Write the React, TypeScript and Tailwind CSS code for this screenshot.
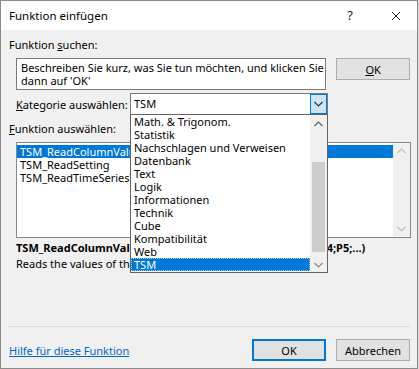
import React from 'react';

const categories = [
  'Math. & Trigonom.',
  'Statistik',
  'Nachschlagen und Verweisen',
  'Datenbank',
  'Text',
  'Logik',
  'Informationen',
  'Technik',
  'Cube',
  'Kompatibilität',
  'Web',
  'TSM',
];

const functions = ['TSM_ReadColumnValues', 'TSM_ReadSetting', 'TSM_ReadTimeSeriesValues'];

function Chevron({ up = false, color = '#606060' }: { up?: boolean; color?: string }) {
  return (
    <svg width="9" height="6" viewBox="0 0 9 6" fill="none">
      <path d={up ? 'M0.5 5 L4.5 1 L8.5 5' : 'M0.5 1 L4.5 5 L8.5 1'} stroke={color} strokeWidth="1.2" />
    </svg>
  );
}

function CategoryDropdown() {
  return (
    <div className="absolute left-0 top-[21px] z-10 flex h-[159px] w-[198px] border border-[#646464] bg-white">
      <ul className="flex-1">
        {categories.map((c) =>
          c === 'TSM' ? (
            <li key={c} className="h-[13px] border border-dotted border-[#99c9ef] bg-[#0078d7] pl-[2px] leading-[11px] text-white">
              {c}
            </li>
          ) : (
            <li key={c} className="h-[13px] pl-[3px] leading-[13px]">
              {c}
            </li>
          ),
        )}
      </ul>
      <div className="flex w-[17px] flex-col bg-[#f0f0f0]">
        <div className="flex h-[17px] items-center justify-center">
          <Chevron up color="#606060" />
        </div>
        <div className="h-[30px]" />
        <div className="mx-[2px] h-[90px] bg-[#cdcdcd]" />
        <div className="flex-1" />
        <div className="flex h-[15px] items-center justify-center">
          <Chevron color="#888888" />
        </div>
      </div>
    </div>
  );
}

export default function App() {
  return (
    <div className="h-[369px] w-[419px] bg-[#dcdcdc]">
      <div className="flex h-[369px] w-[418px] flex-col border border-[#8a8a8a] bg-[#f0f0f0] font-['Noto_Sans',sans-serif] text-[11px] text-black">
        {/* title bar */}
        <div className="flex h-[29px] items-center bg-white pl-[8px]">
          <span className="text-[11.5px] leading-[15px]">Funktion einfügen</span>
          <span className="ml-auto mr-[38px] text-[13px] leading-[15px] text-[#222]">?</span>
          <svg width="10" height="10" viewBox="0 0 10 10" className="mr-[16px]">
            <path d="M1 1 L9 9 M9 1 L1 9" stroke="#222" strokeWidth="1" />
          </svg>
        </div>

        <div className="flex flex-1 flex-col pl-[8px] pr-[7px]">
          <div className="mt-[7px] leading-[15px]">
            Funktion <span className="underline">s</span>uchen:
          </div>

          <div className="mt-[6px] flex items-start gap-[10px] pl-[7px]">
            <div className="h-[32px] w-[311px] border border-[#7a7a7a] bg-white pl-[4px] pr-0 pt-[2px] leading-[13px]">
              Beschreiben Sie kurz, was Sie tun möchten, und klicken Sie dann auf 'OK'
            </div>
            <button className="h-[22px] w-[74px] border border-[#adadad] bg-[#e1e1e1] leading-[15px]">
              <span className="underline">O</span>K
            </button>
          </div>

          <div className="mt-[3px] flex items-center pl-[7px]">
            <span className="w-[114px] leading-[15px]">
              <span className="underline">K</span>ategorie auswählen:
            </span>
            <div className="relative">
              <div className="flex h-[22px] w-[198px] border border-[#7a7a7a] bg-white">
                <span className="flex-1 pl-[3px] leading-[20px]">TSM</span>
                <div className="flex w-[17px] items-center justify-center border border-[#0078d7] bg-[#cce4f7]">
                  <Chevron color="#333" />
                </div>
              </div>
              <CategoryDropdown />
            </div>
          </div>

          <div className="mt-[6px] leading-[15px]">
            <span className="underline">F</span>unktion auswählen:
          </div>

          <div className="ml-[7px] mt-[6px] flex h-[96px] w-[395px] border border-[#828790] bg-white">
            <ul className="flex-1 pt-[2px]">
              {functions.map((f, i) =>
                i === 0 ? (
                  <li key={f} className="h-[13px] bg-[#0078d7] pl-[3px] leading-[13px] text-white">
                    {f}
                  </li>
                ) : (
                  <li key={f} className="h-[13px] pl-[3px] leading-[13px]">
                    {f}
                  </li>
                ),
              )}
            </ul>
            <div className="flex w-[17px] flex-col justify-between bg-[#f0f0f0] py-[5px]">
              <div className="flex justify-center">
                <Chevron up color="#c0c0c0" />
              </div>
              <div className="flex justify-center">
                <Chevron color="#c0c0c0" />
              </div>
            </div>
          </div>

          <div className="mt-[2px] pl-[7px] font-bold leading-[15px]">
            TSM_ReadColumnValues(Verbindungen;Tabelle;Spalten;P4;P5;...)
          </div>
          <div className="mt-[1px] pl-[7px] leading-[15px]">Reads the values of the specified column.</div>

          <div className="mt-auto h-px bg-[#dadada]" />

          <div className="mb-[7px] mt-[12px] flex items-center">
            <a className="leading-[15px] text-[#0066cc] underline">Hilfe für diese Funktion</a>
            <button className="ml-auto h-[22px] w-[74px] border-2 border-[#0078d7] bg-[#e1e1e1] leading-[15px]">OK</button>
            <button className="ml-[10px] h-[22px] w-[74px] border border-[#adadad] bg-[#e1e1e1] leading-[15px]">
              Abbrechen
            </button>
          </div>
        </div>
      </div>
    </div>
  );
}
